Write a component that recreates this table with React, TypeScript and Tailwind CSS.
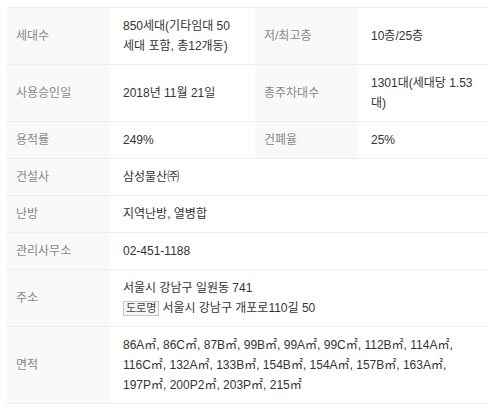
import React from "react";

type Cell = { label: string; value: React.ReactNode; wide?: boolean };
type Row = Cell[];

const rows: Row[] = [
  [
    { label: "세대수", value: "850세대(기타임대 50 세대 포함, 총12개동)" },
    { label: "저/최고층", value: "10층/25층" },
  ],
  [
    { label: "사용승인일", value: "2018년 11월 21일" },
    { label: "총주차대수", value: "1301대(세대당 1.53 대)" },
  ],
  [
    { label: "용적률", value: "249%" },
    { label: "건폐율", value: "25%" },
  ],
  [{ label: "건설사", value: "삼성물산㈜" }],
  [{ label: "난방", value: "지역난방, 열병합" }],
  [{ label: "관리사무소", value: "02-451-1188" }],
  [
    {
      label: "주소",
      value: (
        <>
          <div>서울시 강남구 일원동 741</div>
          <div>
            <span className="inline-block border border-[#c8c8c8] bg-[#f6f6f6] px-[2px] text-[11px] leading-[13px] text-[#444] mr-[3px]">
              도로명
            </span>
            서울시 강남구 개포로110길 50
          </div>
        </>
      ),
    },
  ],
  [
    {
      label: "면적",
      wide: true,
      value:
        "86A㎡, 86C㎡, 87B㎡, 99B㎡, 99A㎡, 99C㎡, 112B㎡, 114A㎡, 116C㎡, 132A㎡, 133B㎡, 154B㎡, 154A㎡, 157B㎡, 163A㎡, 197P㎡, 200P2㎡, 203P㎡, 215㎡",
    },
  ],
];

export default function App() {
  return (
    <div
      className="w-[500px] h-[409px] bg-white pt-[7px] pl-[7px] overflow-hidden"
      style={{ fontFamily: '"Liberation Sans", "Noto Sans CJK KR", sans-serif' }}
    >
      <table className="w-[481px] border-collapse table-fixed text-[12px] leading-[20px]">
        <colgroup>
          <col className="w-[104px]" />
          <col className="w-[144px]" />
          <col className="w-[104px]" />
          <col className="w-[129px]" />
        </colgroup>
        <tbody>
          {rows.map((row, i) => (
            <tr key={i} className="border-t border-[#eeeeee] last:border-b">
              {row.map((c, j) => (
                <React.Fragment key={j}>
                  <th className="bg-[#f9f9f9] text-left font-normal text-[#888] pl-[9px] pr-2 py-[8px] align-middle">
                    {c.label}
                  </th>
                  <td
                    colSpan={row.length === 1 ? 3 : 1}
                    className={`text-[#333] pl-[12px] py-[8px] align-middle break-keep ${
                      c.wide ? "pr-[24px]" : "pr-[4px]"
                    }`}
                  >
                    {c.value}
                  </td>
                </React.Fragment>
              ))}
            </tr>
          ))}
        </tbody>
      </table>
    </div>
  );
}
